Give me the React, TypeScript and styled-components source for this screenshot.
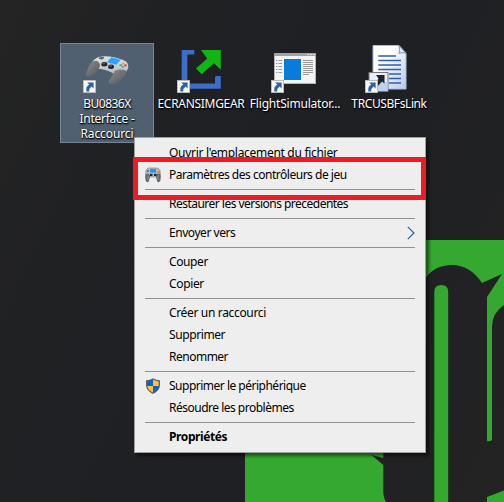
import React from 'react';
import styled, { createGlobalStyle } from 'styled-components';

const GlobalStyle = createGlobalStyle`
  html, body { margin: 0; padding: 0; background: #212224; overflow: hidden; }
`;

const Desktop = styled.main`
  position: relative;
  box-sizing: border-box;
  width: 504px;
  height: 502px;
  padding: 43px 0 0 60px;
  overflow: hidden;
  background: linear-gradient(115deg, #242424 0%, #202123 25%, #1f2023 60%, #232323 100%);
  font-family: 'Noto Sans', 'Open Sans', sans-serif;
  font-size: 12px;
`;

const Wallpaper = styled.svg`
  position: absolute;
  inset: 0;
`;

const IconRow = styled.div`
  position: relative;
  display: flex;
  align-items: flex-start;
`;

const Shortcut = styled.div<{ $selected?: boolean }>`
  display: flex;
  flex-direction: column;
  align-items: center;
  box-sizing: border-box;
  width: 94px;
  height: 100px;
  padding-top: 1px;
  border: 1px solid ${p => (p.$selected ? '#74879a' : 'transparent')};
  background: ${p => (p.$selected ? '#506070' : 'transparent')};
`;

const Label = styled.div`
  margin-top: 3px;
  display: flex;
  flex-direction: column;
  align-items: center;
  color: #fff;
  text-shadow: 1px 1px 2px #000, 0 1px 1px #000;
`;

const Line = styled.span<{ $spacing: number }>`
  height: 15px;
  line-height: 15px;
  white-space: nowrap;
  letter-spacing: ${p => p.$spacing}px;
`;

const Menu = styled.div`
  position: absolute;
  left: 134px;
  top: 137px;
  box-sizing: border-box;
  width: 292px;
  padding: 4px 0;
  border: 1px solid #a0a0a0;
  background: #eee;
  box-shadow: 3px 3px 3px rgba(0, 0, 0, 0.5);
`;

const Item = styled.div`
  display: grid;
  grid-template-columns: 34px 1fr 18px;
  align-items: center;
  height: 22px;
  color: #000;
`;

const IconSlot = styled.span`
  display: flex;
  padding-left: 10px;
`;

const ItemText = styled.span<{ $spacing: number; $bold?: boolean }>`
  line-height: 22px;
  white-space: nowrap;
  font-weight: ${p => (p.$bold ? 700 : 400)};
  letter-spacing: ${p => p.$spacing}px;
`;

const Separator = styled.div`
  height: 1px;
  margin: 3px 10px;
  background: #919191;
`;

const Highlight = styled.div`
  position: absolute;
  left: 133px;
  top: 157px;
  box-sizing: border-box;
  width: 293px;
  height: 43px;
  border: 5px solid #ed1c24;
`;

const ShortcutArrow = () => (
  <g>
    <rect x="0" y="35" width="13" height="13" fill="#aaa" />
    <rect x="0.8" y="35.8" width="11.4" height="11.4" fill="#f7f7f7" />
    <path d="M4.2 37.4H10.6V43.6L8.6 41.6Q6 43.4 6.2 46.4H3.4Q2.4 41.8 6.3 39.5Z" fill="#2d61a5" />
  </g>
);

const GamepadIcon = () => (
  <svg width="48" height="48" viewBox="0 0 48 48">
    <defs>
      <linearGradient id="grip" x1="0" y1="0" x2="1" y2="1">
        <stop offset="0" stopColor="#888c8e" />
        <stop offset="1" stopColor="#53585b" />
      </linearGradient>
      <linearGradient id="shell" x1="0" y1="0" x2="0" y2="1">
        <stop offset="0" stopColor="#dfe2e2" />
        <stop offset="1" stopColor="#b5b8ba" />
      </linearGradient>
    </defs>
    <path d="M9 17Q13 11.5 19 11.4Q29 10.4 40 15Q46 17 45.3 23L41 31L31 29Q27 26 18 24L10 24Z" fill="url(#shell)" />
    <path d="M9.5 16.5Q15 14 17 20Q16 27 8.5 30.5Q2.5 33 3.3 28Q5.5 20 9.5 16.5Z" fill="url(#grip)" />
    <path d="M32 25.5Q39 23.5 43.6 26Q42 32 35.8 36.5Q28.5 41 25.5 37.5Q26 34 29 31Z" fill="url(#grip)" />
    <path d="M28.5 12.2L37.8 14.7L33.4 19.8L23.5 17.3Z" fill="#2ba1ff" stroke="#7bc7ff" strokeWidth=".5" />
    <ellipse cx="21.3" cy="19.3" rx="3" ry="2.2" fill="#202326" />
    <ellipse cx="28" cy="21.8" rx="3" ry="2.2" fill="#202326" />
    <ellipse cx="20.7" cy="18.6" rx="1.7" ry=".9" fill="#555a5e" />
    <ellipse cx="27.5" cy="21" rx="1.7" ry=".9" fill="#555a5e" />
    <path d="M16 13.4L21 12.7M17.7 12L19.3 14.4" stroke="#55595c" strokeWidth="1.4" />
    <ellipse cx="37.8" cy="20.2" rx="1.6" ry="1" fill="#4bb34a" />
    <ellipse cx="40.2" cy="18.6" rx="1.5" ry="1" fill="#e7ad35" />
    <ellipse cx="42.4" cy="20.4" rx="1.5" ry="1.1" fill="#e4493b" />
    <ellipse cx="39.7" cy="22" rx="1.3" ry=".8" fill="#4387cf" />
    <ShortcutArrow />
  </svg>
);

const ExpandIcon = () => (
  <svg width="48" height="48" viewBox="0 0 48 48">
    <path d="M4.7 5H17.3V9.5H10.4V38.4H38V32L39 31H43.8V43.8H4.7Z" fill="#3c6dc8" />
    <path d="M24 5H43.8V24.8L37 18.2L24.7 29.3L19 23.4L30.2 13.4Z" fill="#10b516" />
    <ShortcutArrow />
  </svg>
);

const WindowIcon = () => (
  <svg width="48" height="48" viewBox="0 0 48 48">
    <rect x="3" y="8" width="42" height="31" fill="#b4b4b4" />
    <rect x="4" y="11" width="40" height="27" fill="#f4f4f4" />
    <rect x="3" y="8" width="42" height="3" fill="#a2a2a2" />
    <path d="M36 9.5H38M39 9.5H41M42 9.5H44" stroke="#dedede" />
    <rect x="13" y="14" width="17" height="21" fill="#087bdc" />
    <path d="M5 15.5H6.5M7.5 15.5H11M5 18.5H6.5M7.5 18.5H11M5 21.5H6.5M7.5 21.5H11M5 24.5H6.5M7.5 24.5H11M5 27.5H6.5M7.5 27.5H11M32 15.5H42M32 17.5H42M32 19.5H42M32 21.5H42M32 23.5H42M32 25.5H42M32 27.5H42M32 29.5H38" stroke="#999" />
    <ShortcutArrow />
  </svg>
);

const DocumentIcon = () => (
  <svg width="48" height="48" viewBox="0 0 48 48">
    <defs>
      <linearGradient id="paper" x1="0" y1="0" x2="1" y2="1">
        <stop offset=".35" stopColor="#fcfdff" />
        <stop offset="1" stopColor="#b5c9ef" />
      </linearGradient>
    </defs>
    <path d="M8 .5H34L41 8V44H8Z" fill="url(#paper)" stroke="#a9bde1" />
    <path d="M34 .5Q35 5 34 8.3Q38 7 41 8.3Z" fill="#dce7f9" stroke="#6c8197" strokeWidth=".8" />
    <path d="M13.3 11H31M13.3 15.5H36M13.3 20H36M13.3 24.5H36M24 29H36M24 33.5H36M24 38H36" stroke="#365ea6" strokeWidth="1.4" />
    <rect x="4" y="27.5" width="19" height="19" fill="#e8eef9" stroke="#777" />
    <path d="M13 37H22.5V46H13Z" fill="#bdd0f2" />
    <path d="M11 30H19.5V38.5L17 36.5L12 42H8.5L13.5 33.5Z" fill="#20242a" />
    <ShortcutArrow />
  </svg>
);

const ControllerGlyph = () => (
  <svg width="16" height="16" viewBox="0 0 16 16">
    <path d="M1 3Q3 .3 5.3 1H10.8Q13.8.4 15 3.2L15.5 10H.5Z" fill="#b8bec1" stroke="#778087" strokeWidth=".6" />
    <path d="M.9 7Q3.5 5.6 5 8.5V10L3.8 14.5Q2.1 16 .8 14Q-.2 10 .9 7ZM15.1 7Q12.5 5.6 11 8.5V10L12.2 14.5Q13.9 16 15.2 14Q16.2 10 15.1 7Z" fill="#60686d" />
    <path d="M2 9Q3 8 3.4 10L2.7 13M14 9Q13 8 12.6 10L13.3 13" stroke="#8e979b" fill="none" />
    <rect x="5" y="2" width="6" height="3.6" fill="#2198ea" />
    <rect x="5" y="6.8" width="2.5" height="2.2" fill="#22272b" />
    <rect x="9" y="6.8" width="2.5" height="2.2" fill="#22272b" />
    <circle cx="3" cy="4" r="1" fill="#555c60" />
    <circle cx="13" cy="3.3" r=".8" fill="#efb735" />
    <circle cx="14" cy="5" r=".8" fill="#e44a36" />
    <circle cx="12.3" cy="5.1" r=".7" fill="#56a955" />
  </svg>
);

const ShieldGlyph = () => (
  <svg width="16" height="16" viewBox="0 0 16 16">
    <path d="M8 .2Q11 2.2 15 2.2V7.5Q14.6 13 8 15.9Q1.4 13 1 7.5V2.2Q5 2.2 8 .2Z" fill="#58606a" />
    <path d="M8 1.6V8H2.3V3.4Q5.6 3.2 8 1.6ZM8 8H13.7Q13.2 12.2 8 14.6Z" fill="#0863cf" />
    <path d="M8 1.6Q10.4 3.2 13.7 3.4V8H8ZM2.3 8H8V14.6Q2.8 12.2 2.3 8Z" fill="#ffc13b" />
  </svg>
);

const Chevron = () => (
  <svg width="9" height="14" viewBox="0 0 9 14">
    <path d="M.8 .8L7 7L.8 13.2" fill="none" stroke="#2a5f95" strokeWidth="1.15" />
  </svg>
);

type LabelLine = [string, number];
const shortcuts: { icon: React.ReactNode; lines: LabelLine[]; selected?: boolean }[] = [
  { icon: <GamepadIcon />, selected: true, lines: [['BU0836X', -0.5], ['Interface -', -0.25], ['Raccourci', -0.1]] },
  { icon: <ExpandIcon />, lines: [['ECRANSIMGEAR', -0.3]] },
  { icon: <WindowIcon />, lines: [['FlightSimulator...', -0.2]] },
  { icon: <DocumentIcon />, lines: [['TRCUSBFsLink', -0.4]] },
];

type Entry = { text: string; spacing: number; icon?: React.ReactNode; bold?: boolean; submenu?: boolean };
const groups: Entry[][] = [
  [
    { text: "Ouvrir l'emplacement du fichier", spacing: -0.3 },
    { text: 'Paramètres des contrôleurs de jeu', spacing: -0.48 },
  ],
  [{ text: 'Restaurer les versions précédentes', spacing: -0.52 }],
  [{ text: 'Envoyer vers', spacing: -0.45, submenu: true }],
  [{ text: 'Couper', spacing: -0.4 }, { text: 'Copier', spacing: -0.35 }],
  [{ text: 'Créer un raccourci', spacing: -0.34 }, { text: 'Supprimer', spacing: -0.4 }, { text: 'Renommer', spacing: -0.5 }],
  [{ text: 'Supprimer le périphérique', spacing: -0.5, icon: <ShieldGlyph /> }, { text: 'Résoudre les problèmes', spacing: -0.5 }],
  [{ text: 'Propriétés', spacing: -0.4, bold: true }],
];
groups[0][1].icon = <ControllerGlyph />;

export default function App() {
  return (
    <>
      <GlobalStyle />
      <Desktop>
        <Wallpaper width="504" height="502" viewBox="0 0 504 502">
          <path d="M400 240H504V305Q492 313 492 327V440Q490 442 487 441V297L502 274L482 283Q470 265 452 265Q434 265 425 279H400Z" fill="#34a82f" />
          <path d="M434.3 502V292Q434.3 285 441.2 285Q448.2 285 448.2 292V502Z" fill="#34a82f" />
          <path d="M245 440H383.3V458L371.5 455L383.3 465V493Q383.5 498 386 502H245Z" fill="#34a82f" />
          <path d="M487 502V497L504 490.5V502Z" fill="#34a82f" />
        </Wallpaper>
        <IconRow>
          {shortcuts.map(s => (
            <Shortcut key={s.lines[0][0]} $selected={s.selected}>
              {s.icon}
              <Label>
                {s.lines.map(([text, spacing]) => <Line key={text} $spacing={spacing}>{text}</Line>)}
              </Label>
            </Shortcut>
          ))}
        </IconRow>
        <Menu>
          {groups.map((group, i) => (
            <React.Fragment key={group[0].text}>
              {i > 0 && <Separator />}
              {group.map(entry => (
                <Item key={entry.text}>
                  <IconSlot>{entry.icon}</IconSlot>
                  <ItemText $spacing={entry.spacing} $bold={entry.bold}>{entry.text}</ItemText>
                  {entry.submenu && <Chevron />}
                </Item>
              ))}
            </React.Fragment>
          ))}
        </Menu>
        <Highlight />
      </Desktop>
    </>
  );
}
